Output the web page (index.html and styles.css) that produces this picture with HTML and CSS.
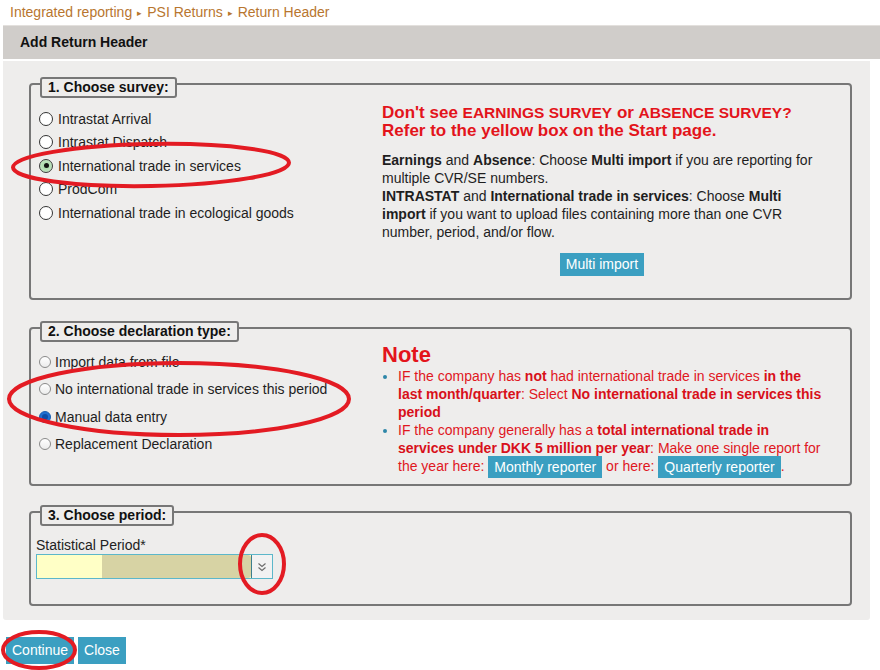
FILE: index.html
```html
<!DOCTYPE html>
<html lang="en">
<head>
<meta charset="utf-8">
<title>Add Return Header</title>
<link rel="stylesheet" href="styles.css">
</head>
<body>
<div class="page">
  <div class="crumbs"><span>Integrated reporting</span><span class="sep">&#9656;</span><span>PSI Returns</span><span class="sep">&#9656;</span><span>Return Header</span></div>
  <div class="titlebar">Add Return Header</div>
  <div class="panel">
    <section class="fs fs1">
      <div class="legend">1. Choose survey:</div>
      <div class="cols">
        <ul class="radios big">
          <li><span class="rb"></span>Intrastat Arrival</li>
          <li><span class="rb"></span>Intrastat Dispatch</li>
          <li><span class="rb on"></span>International trade in services</li>
          <li><span class="rb"></span>ProdCom</li>
          <li><span class="rb"></span>International trade in ecological goods</li>
        </ul>
        <div class="info">
          <p class="warn">Don't see <span class="caps">EARNINGS SURVEY</span> or <span class="caps">ABSENCE SURVEY?</span><br>Refer to the yellow box on the Start page.</p>
          <p class="desc"><b>Earnings</b> and <b>Absence</b>: Choose <b>Multi import</b> if you are reporting for multiple CVR/SE numbers.<br><b>INTRASTAT</b> and <b>International trade in services</b>: Choose <b>Multi import</b> if you want to upload files containing more than one CVR number, period, and/or flow.</p>
          <div class="center"><span class="btn small">Multi import</span></div>
        </div>
      </div>
    </section>

    <section class="fs fs2">
      <div class="legend">2. Choose declaration type:</div>
      <div class="cols">
        <ul class="radios sm">
          <li><span class="rb"></span>Import data from file</li>
          <li><span class="rb"></span>No international trade in services this period</li>
          <li><span class="rb on"></span>Manual data entry</li>
          <li><span class="rb"></span>Replacement Declaration</li>
        </ul>
        <div class="info note">
          <h2>Note</h2>
          <ul class="bullets">
            <li>IF the company has <b>not</b> had international trade in services <b>in the last month/quarter</b>: Select <b>No international trade in services this period</b></li>
            <li>IF the company generally has a <b>total international trade in services under DKK 5 million per year</b>: Make one single report for the year here: <span class="btn inline">Monthly reporter</span> or here: <span class="btn inline">Quarterly reporter</span>.</li>
          </ul>
        </div>
      </div>
    </section>

    <section class="fs fs3">
      <div class="legend">3. Choose period:</div>
      <div class="field">
        <div class="label">Statistical Period*</div>
        <div class="select">
          <span class="v1"></span><span class="v2"></span>
          <span class="arrow"><svg width="10" height="12" viewBox="0 0 10 12"><path d="M1.5 2.5 L5 5.5 L8.5 2.5 M1.5 6.5 L5 9.5 L8.5 6.5" fill="none" stroke="#6a6a6a" stroke-width="1.1"/></svg></span>
        </div>
      </div>
    </section>
  </div>
  <div class="actions"><span class="btn big">Continue</span><span class="btn big">Close</span></div>
</div>
<svg class="marks" width="880" height="670" viewBox="0 0 880 670">
  <g fill="none" stroke="#e31b23" stroke-width="4">
    <ellipse cx="151" cy="165" rx="138" ry="21" transform="rotate(-1 151 165)"/>
    <ellipse cx="179" cy="399" rx="170" ry="36"/>
    <ellipse cx="262" cy="564" rx="22" ry="29"/>
    <ellipse cx="39" cy="650" rx="36" ry="18"/>
  </g>
</svg>
</body>
</html>
```

FILE: styles.css
```css
* { box-sizing: border-box; }
html, body { margin: 0; padding: 0; background: #ffffff; }
body {
  font-family: "Liberation Sans", Arial, sans-serif;
  font-size: 14px;
  color: #1e1e1e;
  width: 880px;
  height: 670px;
  overflow: hidden;
  position: relative;
}
.page { padding-left: 3px; }

.crumbs {
  height: 25px;
  line-height: 24px;
  padding-left: 7px;
  color: #b8762f;
  font-size: 14px;
}
.crumbs .sep { font-size: 9px; margin: 0 5px; vertical-align: 1px; }

.titlebar {
  height: 34px;
  line-height: 32px;
  background: #d0cdca;
  border-top: 1px solid #e3e0dd;
  padding-left: 17px;
  font-weight: bold;
  color: #111;
}

.panel {
  margin-top: 2px;
  margin-right: 10px;
  background: #eeedec;
  padding: 0 18px 14px 26px;
  border-radius: 0 0 3px 3px;
  overflow: hidden;
}

.fs {
  border: 2px solid #777;
  border-radius: 4px;
  padding: 0 28px 0 8px;
}
.fs1 { margin-top: 22px; padding-bottom: 22px; }
.fs2 { margin-top: 27px; padding-bottom: 8px; }
.fs3 { margin-top: 25px; padding-bottom: 25px; }

.legend {
  display: table;
  margin: -8px 0 0 1px;
  border: 2px solid #777;
  border-radius: 3px;
  background: #eeedec;
  padding: 0 6px;
  line-height: 17px;
  font-weight: bold;
  color: #111;
}

.cols {
  display: grid;
  grid-template-columns: 343px 440px;
}
.fs1 .cols { margin-top: 3px; }
.fs2 .cols { margin-top: 0; }

.radios { list-style: none; margin: 0; padding: 0; }
.radios li { display: flex; align-items: center; white-space: nowrap; }
.radios.big { padding-top: 6px; }
.radios.big li { height: 23.5px; }
.radios.sm { padding-top: 6px; }
.radios.sm li { height: 27.5px; }

.rb {
  display: inline-block;
  border-radius: 50%;
  background: #fff;
  position: relative;
  flex: none;
}
.big .rb { width: 14px; height: 14px; border: 1px solid #333; margin-right: 5px; }
.big .rb.on { background: radial-gradient(circle, #9fd49f 0, #bfe3bf 70%); border-color: #3c3c3c; }
.big .rb.on::after {
  content: "";
  position: absolute;
  left: 3.5px; top: 3.5px;
  width: 5px; height: 5px;
  border-radius: 50%;
  background: #111;
}
.sm .rb { width: 12px; height: 12px; border: 1px solid #8a8a8a; margin-right: 4px; background: linear-gradient(#fff, #ececec); }
.sm .rb.on { background: #1f6fd0; border-color: #1a5fb0; }
.sm .rb.on::after {
  content: "";
  position: absolute;
  left: 2px; top: 2px;
  width: 6px; height: 6px;
  border-radius: 50%;
  background: #0b4da8;
}

.info p { margin: 0; }
.warn {
  margin-top: 3px !important;
  color: #e3141b;
  font-weight: bold;
  font-size: 17px;
  line-height: 18px;
}
.warn .caps { font-size: 15.5px; }
.desc {
  margin-top: 11px !important;
  line-height: 18px;
}
.center { text-align: center; margin-top: 12px; }

.btn {
  display: inline-block;
  background: #3b9fc1;
  color: #fff;
  white-space: nowrap;
}
.btn.small { height: 23px; line-height: 23px; padding: 0 6px; }
.btn.inline { height: 22px; line-height: 22px; padding: 0 6px; margin: -2px 0; vertical-align: middle; }
.btn.big { height: 27px; line-height: 27px; padding: 0 6px; font-size: 14px; }

.note { color: #e0171e; }
.note h2 {
  margin: 1px 0 0;
  font-size: 22px;
  line-height: 24px;
  font-weight: bold;
  color: #e3141b;
}
.bullets { margin: 0; padding-left: 16px; }
.bullets li { line-height: 18px; }
.bullets li::marker { color: #2d86a8; }
.bullets b { color: #d8101a; }

.field { margin: 10px 0 0 -3px; }
.label { line-height: 18px; color: #222; }
.select {
  display: flex;
  width: 237px;
  height: 25px;
  border: 1px solid #5cb7ca;
  background: #ffffc6;
}
.select .v1 { width: 65px; }
.select .v2 { width: 149px; background: #d7d3a4; border-radius: 0 3px 3px 0; }
.select .arrow {
  width: 21px;
  border-left: 1px solid #3d7f8e;
  background: #f2f2f2;
  display: flex;
  align-items: center;
  justify-content: center;
}

.actions { margin: 17px 0 0 3px; display: flex; gap: 4px; }

.marks { position: absolute; left: 0; top: 0; pointer-events: none; }
```
